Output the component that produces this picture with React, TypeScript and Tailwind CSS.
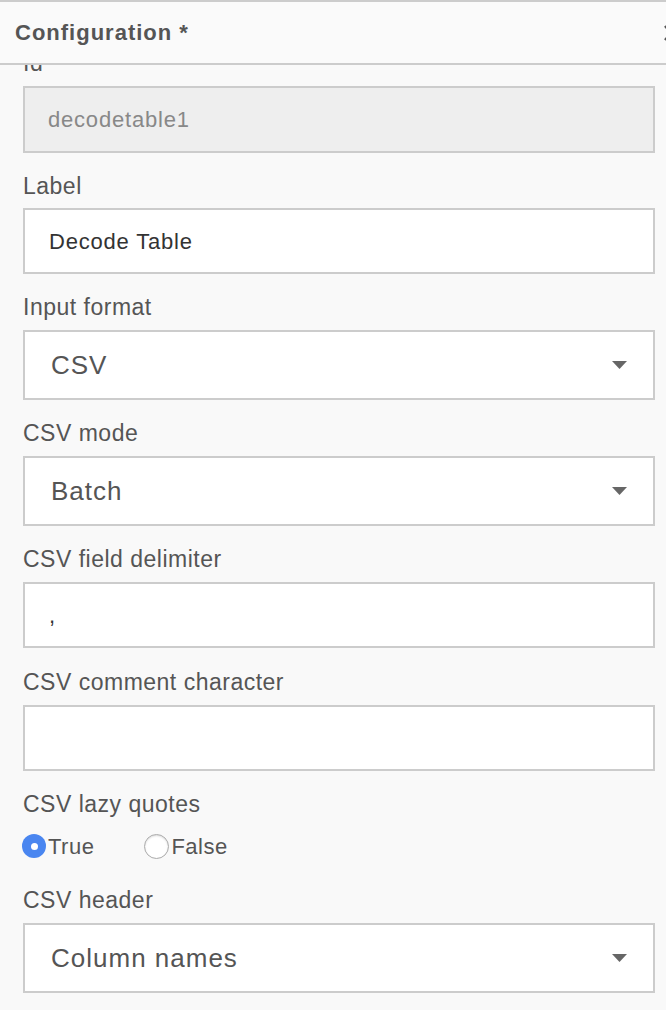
type FieldProps = {
  label: string;
  children: React.ReactNode;
  className?: string;
  gap?: string;
};

function Field({ label, children, className = "mt-[18px]", gap = "mt-[8px]" }: FieldProps) {
  return (
    <div className={className}>
      <div className="h-[30px] flex items-center text-[23px] tracking-[0.5px] text-[#555]">{label}</div>
      <div className={gap}>{children}</div>
    </div>
  );
}

function TextBox({ value, disabled }: { value: string; disabled?: boolean }) {
  return (
    <div
      className={
        disabled
          ? "h-[67px] border-2 border-[#ccc] bg-[#eee] pl-[23px] flex items-center text-[22px] tracking-[0.8px] text-[#888]"
          : "h-[66px] border-2 border-[#ccc] bg-white pl-[24px] flex items-center text-[22px] tracking-[0.8px] text-[#333]"
      }
    >
      {value}
    </div>
  );
}

function SelectBox({ value }: { value: string }) {
  return (
    <div className="h-[70px] border-2 border-[#ccc] bg-white pl-[26px] pr-[26px] flex items-center justify-between text-[26px] tracking-[1px] text-[#555]">
      <span>{value}</span>
      <svg width="15" height="8" viewBox="0 0 15 8" className="shrink-0">
        <path d="M0 0 H15 L7.5 8 Z" fill="#666" />
      </svg>
    </div>
  );
}

function Radio({ label, checked }: { label: string; checked?: boolean }) {
  return (
    <div className="flex items-center text-[22px] tracking-[0.5px] text-[#555]">
      {checked ? (
        <span className="w-[24px] h-[24px] rounded-full bg-[#4a86f0] flex items-center justify-center">
          <span className="w-[7px] h-[7px] rounded-full bg-white" />
        </span>
      ) : (
        <span className="w-[25px] h-[25px] rounded-full bg-white border border-[#aaa] shadow-[inset_0_1px_2px_rgba(0,0,0,0.15)]" />
      )}
      <span className="ml-[2px]">{label}</span>
    </div>
  );
}

export default function App() {
  return (
    <div
      className="w-[666px] h-[1010px] overflow-hidden bg-[#f9f9f9]"
      style={{ fontFamily: '"Liberation Sans", Arial, sans-serif' }}
    >
      <div className="h-[65px] border-t-2 border-b-2 border-[#ccc] bg-[#fafafa] pl-[15px] flex items-center overflow-hidden">
        <h1 className="text-[22px] font-bold tracking-[1px] text-[#555]">Configuration *</h1>
        <svg width="16" height="18" viewBox="0 0 16 18" className="ml-auto shrink-0 -mr-[13px]">
          <path d="M2 2 L14 16 M14 2 L2 16" stroke="#555" strokeWidth="2.5" />
        </svg>
      </div>

      <div className="h-[945px] overflow-hidden pl-[23px] pr-[11px]">
        <Field label="Id" className="-mt-[17px]">
          <TextBox value="decodetable1" disabled />
        </Field>
        <Field label="Label" gap="mt-[7px]">
          <TextBox value="Decode Table" />
        </Field>
        <Field label="Input format">
          <SelectBox value="CSV" />
        </Field>
        <Field label="CSV mode">
          <SelectBox value="Batch" />
        </Field>
        <Field label="CSV field delimiter">
          <TextBox value="," />
        </Field>
        <Field label="CSV comment character" className="mt-[19px]">
          <TextBox value="" />
        </Field>
        <div className="mt-[18px]">
          <div className="h-[30px] flex items-center text-[23px] tracking-[0.5px] text-[#555]">CSV lazy quotes</div>
          <div className="mt-[10px] h-[34px] flex items-center gap-[50px] -ml-[1px]">
            <Radio label="True" checked />
            <Radio label="False" />
          </div>
        </div>
        <Field label="CSV header" className="mt-[22px]">
          <SelectBox value="Column names" />
        </Field>
      </div>
    </div>
  );
}
